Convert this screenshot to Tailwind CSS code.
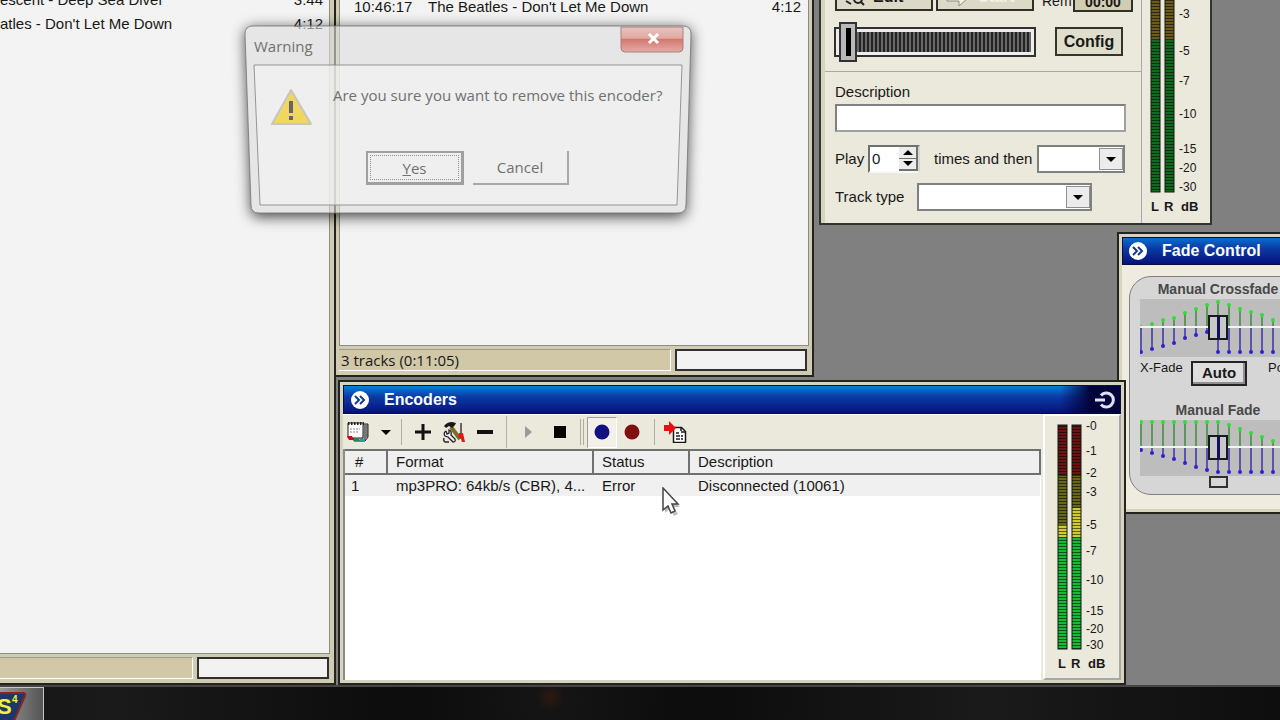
<!DOCTYPE html>
<html lang="en">
<head>
    <meta charset="UTF-8">
    <meta name="viewport" content="width=device-width, initial-scale=1.0">
    <title>Encoders</title>
    <script src="https://cdn.jsdelivr.net/npm/@tailwindcss/browser@4"></script>
</head>
<body class="relative h-screen overflow-hidden bg-[#808080] font-['Liberation_Sans',Arial,sans-serif] text-[15px] leading-5 text-[#181818]">

    <!-- Playlist -->
    <section class="absolute -top-3 left-0 flex h-[697px] w-[336px] flex-col border-r-2 border-b-2 border-[#24241e] bg-[#d0ccb4] pr-[4px] pb-[4px]">
        <ul class="flex-1 border-r border-b border-[#8c8c84] bg-[#f3f3f3] pr-[6px]">
            <li class="flex h-6 items-center justify-between"><span>escent - Deep Sea Diver</span><span>3:44</span></li>
            <li class="flex h-6 items-center justify-between"><span>atles - Don't Let Me Down</span><span>4:12</span></li>
        </ul>
        <div class="mt-[3px] flex h-[22px] gap-1 pr-px">
            <div class="flex-1 border-t border-r border-b border-t-[#a09c88] border-r-white border-b-white bg-[#d1c8a7]"></div>
            <div class="w-[132px] border-2 border-[#303030] bg-[#f2f2f2]"></div>
        </div>
    </section>

    <!-- Queue -->
    <section class="absolute -top-1 left-[334px] flex h-[381px] w-[480px] flex-col border-2 border-[#24241e] bg-[#d0ccb4] px-[3px] pb-[4px]">
        <ul class="flex-1 border-x border-b border-[#8c8c84] bg-[#f3f3f3] pr-[7px] pl-[14px]">
            <li class="flex h-[18px] items-center"><span class="w-[74px]">10:46:17</span><span class="flex-1">The Beatles - Don't Let Me Down</span><span>4:12</span></li>
        </ul>
        <div class="mt-[3px] flex h-[22px] gap-1 pr-[2px]">
            <div class="flex flex-1 items-center border-t border-r border-b border-t-[#a09c88] border-r-white border-b-white bg-[#d1c8a7] pl-[2px] font-['Open_Sans',sans-serif]">3 tracks (0:11:05)</div>
            <div class="w-[132px] border-2 border-[#303030] bg-[#f2f2f2]"></div>
        </div>
    </section>

    <!-- Voice panel -->
    <section class="absolute -top-5 left-[819px] flex h-[245px] w-[393px] border-2 border-[#34342c] bg-[#ebe8dc]">
        <div class="flex w-[320px] flex-col border-l-4 border-[#d6d3be]">
            <div class="flex h-[90px] flex-col justify-between border-b border-[#a8a8a0] pb-[15px] pl-[10px]">
                <div class="flex h-[30px]">
                    <button class="flex h-[29px] w-[98px] items-center gap-2 border-2 border-[#303028] bg-[#dcd9c6] pl-2 text-base font-bold">
                        <svg class="size-5" viewBox="0 0 20 20" fill="none" stroke="#222" stroke-width="2"><circle cx="13" cy="12" r="4"/><path d="M1 14l5 3M16 15l3 3"/></svg>Edit
                    </button>
                    <button disabled class="ml-[3px] flex h-[29px] w-[98px] items-center gap-2 border-2 border-[#303028] bg-[#dcd9c6] pl-2 text-base font-bold text-[#f4f2e8]">
                        <svg class="size-6" viewBox="0 0 24 24" fill="#f4f2e8" stroke="#8c8c84"><path d="M1 10h12V5l9 8-9 8v-5H1z"/></svg>Start
                    </button>
                    <span class="mt-[9px] ml-2 w-[31px] text-sm">Rem</span>
                    <output class="h-[30px] w-[60px] border-2 border-[#303028] bg-[#d1cdb2] pt-[8px] text-center text-sm font-bold">00:00</output>
                </div>
                <div class="flex h-[29px] items-center">
                    <input type="range" min="0" max="100" value="0" aria-label="Position" class="h-[42px] w-[200px] appearance-none bg-transparent [&::-webkit-slider-runnable-track]:h-[28px] [&::-webkit-slider-runnable-track]:border-4 [&::-webkit-slider-runnable-track]:border-[#ededed] [&::-webkit-slider-runnable-track]:bg-[repeating-linear-gradient(90deg,#222_0_2px,#686868_2px_4px)] [&::-webkit-slider-runnable-track]:outline-2 [&::-webkit-slider-runnable-track]:-outline-offset-1 [&::-webkit-slider-runnable-track]:outline-[#303030] [&::-webkit-slider-thumb]:relative [&::-webkit-slider-thumb]:-mt-[10px] [&::-webkit-slider-thumb]:h-[40px] [&::-webkit-slider-thumb]:w-[18px] [&::-webkit-slider-thumb]:appearance-none [&::-webkit-slider-thumb]:border-2 [&::-webkit-slider-thumb]:border-[#333] [&::-webkit-slider-thumb]:bg-[linear-gradient(90deg,#b8b8b8_5px,#000_5px_10px,#b8b8b8_10px)] [&::-webkit-slider-thumb]:shadow-[inset_0_4px_#b8b8b8,inset_0_-4px_#b8b8b8]">
                    <button class="ml-[20px] h-[29px] w-[68px] border-2 border-[#34342c] bg-[#dfddcc] text-base font-bold">Config</button>
                </div>
            </div>
            <div class="flex flex-1 flex-col pt-[10px] pl-[10px]">
                <label for="desc">Description</label>
                <input id="desc" type="text" class="mt-[2px] h-[28px] w-[291px] border-2 border-[#808080] border-r-[#a0a0a0] border-b-[#a0a0a0] bg-white">
                <div class="mt-[13px] flex h-[28px] items-center">
                    <label for="times" class="w-[33px]">Play</label>
                    <div class="flex h-[28px] w-[52px] border-2 border-[#707070] border-r-[#d8d8d0] border-b-[#f8f8f8] bg-white">
                        <input id="times" type="text" value="0" class="w-[29px] pl-[2px]">
                        <div class="flex flex-1 flex-col">
                            <button aria-label="More" class="flex flex-1 items-center justify-center border-r-2 border-b border-[#707070] bg-[#ececec]"><svg class="h-[5px] w-[10px]" viewBox="0 0 10 5"><path d="M0 5L5 0l5 5z"/></svg></button>
                            <button aria-label="Fewer" class="flex flex-1 items-center justify-center border-r-2 border-b-2 border-[#707070] bg-[#ececec]"><svg class="h-[5px] w-[10px]" viewBox="0 0 10 5"><path d="M0 0l5 5 5-5z"/></svg></button>
                        </div>
                    </div>
                    <label for="then" class="ml-[14px] w-[103px]">times and then</label>
                    <div class="relative">
                        <select id="then" class="block h-[28px] w-[88px] appearance-none border-2 border-[#808080] bg-white"><option></option></select>
                        <span class="pointer-events-none absolute top-[3px] right-[2px] flex h-[22px] w-6 items-center justify-center border border-[#909090] bg-[#ececec]"><svg class="h-[5px] w-[10px]" viewBox="0 0 10 5"><path d="M0 0l5 5 5-5z"/></svg></span>
                    </div>
                </div>
                <div class="mt-[10px] flex h-[28px] items-center">
                    <label for="type" class="w-[82px]">Track type</label>
                    <div class="relative">
                        <select id="type" class="block h-[28px] w-[175px] appearance-none border-2 border-[#808080] bg-white"><option></option></select>
                        <span class="pointer-events-none absolute top-[3px] right-[2px] flex h-[22px] w-6 items-center justify-center border border-[#909090] bg-[#ececec]"><svg class="h-[5px] w-[10px]" viewBox="0 0 10 5"><path d="M0 0l5 5 5-5z"/></svg></span>
                    </div>
                </div>
            </div>
        </div>
        <svg class="h-full flex-1 border-l border-[#a8a8b0]" viewBox="1142 -18 68 241" preserveAspectRatio="xMinYMin" fill="#181818">
            <defs>
                <pattern id="lines" width="12" height="3" patternUnits="userSpaceOnUse"><rect width="12" height="1" fill="#000" fill-opacity=".55"/></pattern>
            </defs>
            <g id="voiceMeter"></g>
            <g id="voiceScale" class="text-[12px]"></g>
            <text x="1151" y="211" class="text-[13px] font-bold">L</text>
            <text x="1164" y="211" class="text-[13px] font-bold">R</text>
            <text x="1181" y="211" class="text-[13px] font-bold">dB</text>
        </svg>
    </section>

    <!-- Fade control -->
    <section class="absolute top-[232px] left-[1117px] h-[282px] w-[202px] border-2 border-[#24241e] bg-[#d6d3be] p-[3px]">
        <div class="flex h-full flex-col bg-[#efecdf]">
            <h2 class="flex h-[28px] items-center gap-[15px] border border-[#061040] bg-linear-to-b from-[#0a6fd0] via-[#0c3aa4] via-40% to-[#08107c] pl-[6px] text-base font-bold text-white">
                <svg class="size-[18px]" viewBox="0 0 18 18"><circle cx="9" cy="9" r="9" fill="#fff"/><path d="M4 5l4 4-4 4M9 5l4 4-4 4" fill="none" stroke="#123a94" stroke-width="2"/></svg>
                <span>Fade Control</span>
            </h2>
            <div class="mx-[7px] mt-[11px] flex h-[219px] flex-col items-center rounded-[22px] border border-[#808080] bg-[#d6d6d6] pt-[2px] text-[13px]">
                <h3 class="h-5 text-sm leading-5 font-bold text-[#484848]">Manual Crossfade</h3>
                <div class="relative">
                    <svg id="crossfade" class="h-[58px] w-[156px] bg-[#bdbdbd]" viewBox="0 0 156 58"></svg>
                    <input type="range" aria-label="Manual Crossfade" class="absolute inset-0 h-[56px] w-[156px] appearance-none bg-transparent [&::-webkit-slider-thumb]:h-[25px] [&::-webkit-slider-thumb]:w-[20px] [&::-webkit-slider-thumb]:appearance-none [&::-webkit-slider-thumb]:border-2 [&::-webkit-slider-thumb]:border-[#181820] [&::-webkit-slider-thumb]:bg-[linear-gradient(90deg,#c8c8c8_7px,#10105c_7px_10px,#c8c8c8_10px)]">
                </div>
                <div class="mt-[3px] flex h-[26px] w-[156px] items-center whitespace-nowrap">
                    <span class="w-[51px] self-start leading-4">X-Fade</span>
                    <button class="h-[25px] w-[56px] border-2 border-[#242424] bg-[#dedede] text-[15px] font-bold shadow-[inset_-2px_-2px_#909090]">Auto</button>
                    <span class="ml-[21px] self-start leading-4">Post</span>
                </div>
                <h3 class="mt-[14px] h-5 text-sm leading-5 font-bold text-[#484848]">Manual Fade</h3>
                <div class="relative">
                    <svg id="fade" class="h-[56px] w-[156px] bg-[#bdbdbd]" viewBox="0 0 156 56"></svg>
                    <input type="range" aria-label="Manual Fade" class="absolute inset-0 h-[54px] w-[156px] appearance-none bg-transparent [&::-webkit-slider-thumb]:h-[25px] [&::-webkit-slider-thumb]:w-[20px] [&::-webkit-slider-thumb]:appearance-none [&::-webkit-slider-thumb]:border-2 [&::-webkit-slider-thumb]:border-[#181820] [&::-webkit-slider-thumb]:bg-[linear-gradient(90deg,#c8c8c8_7px,#10105c_7px_10px,#c8c8c8_10px)]">
                </div>
                <button aria-label="Reset" class="h-[12px] w-[19px] border-2 border-[#303030]"></button>
            </div>
        </div>
    </section>

    <!-- Encoders -->
    <section class="absolute top-[380px] left-[338px] h-[305px] w-[788px] border-2 border-[#24241e] bg-[#d6d3be] p-[3px]">
        <div class="flex h-full flex-col bg-[#ebe8dc]">
            <h2 class="flex h-[29px] shrink-0 items-center border border-[#061040] bg-linear-to-b from-[#0a7fde] via-[#0c3aa4] via-40% to-[#08107c] pl-[7px] text-base font-bold text-white">
                <svg class="size-[18px]" viewBox="0 0 18 18"><circle cx="9" cy="9" r="9" fill="#fff"/><path d="M4 5l4 4-4 4M9 5l4 4-4 4" fill="none" stroke="#123a94" stroke-width="2"/></svg>
                <span class="ml-[15px] flex-1">Encoders</span>
                <span class="flex h-full w-[60px] items-center justify-end bg-linear-to-r from-transparent to-[#04043c] to-50% pr-1">
                    <svg class="h-[18px] w-[21px]" viewBox="0 0 21 18" fill="none" stroke="#dfe2f5" stroke-width="3"><path d="M6 4.500A7 7 0 1 1 6 13.500M0 9h10"/></svg>
                </span>
            </h2>
            <div class="flex min-h-0 flex-1">
                <div class="flex flex-1 flex-col border-t border-white">
                    <div class="flex h-[34px] items-center pl-[3px]">
                        <button aria-label="Encoder list" class="w-[25px]">
                            <svg class="h-[22px] w-[23px]" viewBox="0 0 23 22">
                                <path d="M6 3h16v13l-3 4H8z" fill="#aaa" stroke="#222"/>
                                <path d="M19 4v15M21 4v12" stroke="#444"/>
                                <path d="M2 2h15v15H2z" fill="#fff" stroke="#222"/>
                                <path d="M2 2.500h16" stroke="#222" stroke-width="3" stroke-dasharray="1.500 1.500"/>
                                <path d="M4 8h10M4 11h8" stroke="#888" stroke-dasharray="2 1"/>
                                <path d="M1 15h5l2 4H3z" fill="#c01020"/><path d="M8 17h5v3H8z" fill="#189048"/><path d="M14 18h5v3h-5z" fill="#20a0a0"/>
                            </svg>
                        </button>
                        <button aria-label="Encoder menu" class="flex w-[30px] justify-center"><svg class="h-[5px] w-[10px]" viewBox="0 0 10 5"><path d="M0 0l5 5 5-5z"/></svg></button>
                        <i class="mr-[5px] h-[26px] w-px bg-[#b0aea2]"></i>
                        <button aria-label="Add" class="flex w-[31px] justify-center"><svg class="size-[18px]" viewBox="0 0 18 18"><path d="M9 1v16M1 9h16" stroke="#111" stroke-width="3"/></svg></button>
                        <button aria-label="Configure" class="flex w-[31px] justify-center">
                            <svg class="h-[23px] w-[24px]" viewBox="0 0 24 23" fill="none">
                                <path d="M9 6l9 12" stroke="#77702c" stroke-width="4"/>
                                <path d="M2 5q3-4 8-4l4 1-1 2-3 3-3-2-3 2z" fill="#181818"/>
                                <path d="M19 2v11" stroke="#666" stroke-width="2"/>
                                <path d="M17 12h4l2 9h-3l-1-3-3-2z" fill="#d81c18"/>
                                <path d="M4 10q-3 2-1 5l3 1 5 5q3 0 2-3l-4-4q1-4-2-5v3l-2 1-1-3M2 17q-1 3 1 4h4" fill="#eee" stroke="#222" stroke-width="1.300"/>
                            </svg>
                        </button>
                        <button aria-label="Remove" class="flex w-[31px] justify-center"><svg class="size-[18px]" viewBox="0 0 18 18"><path d="M1 9h16" stroke="#111" stroke-width="4"/></svg></button>
                        <i class="mr-[6px] ml-[6px] h-[32px] w-px bg-[#b0aea2]"></i>
                        <button disabled aria-label="Start" class="flex w-[31px] justify-center"><svg class="h-[12px] w-[7px]" viewBox="0 0 7 12"><path d="M0 0l7 6-7 6z" fill="#999"/></svg></button>
                        <button aria-label="Stop" class="flex w-[31px] justify-center"><svg class="size-3" viewBox="0 0 12 12"><path d="M0 0h12v12H0z"/></svg></button>
                        <i class="mr-[3px] ml-[5px] h-[26px] w-[4px] border-x border-[#b0aea2]"></i>
                        <button aria-label="Connect" class="flex h-[31px] w-[30px] items-center justify-center border border-t-[#a0a0a0] border-r-white border-b-white border-l-[#a0a0a0] bg-[#f2f0e8]"><svg class="size-4" viewBox="0 0 16 16"><circle cx="8" cy="8" r="7.500" fill="#101080"/></svg></button>
                        <button aria-label="Record" class="flex w-[30px] justify-center"><svg class="size-4" viewBox="0 0 16 16"><circle cx="8" cy="8" r="7.500" fill="#801010"/></svg></button>
                        <i class="mr-[5px] ml-[7px] h-[26px] w-px bg-[#b0aea2]"></i>
                        <button aria-label="Export log" class="flex w-[31px] justify-center">
                            <svg class="h-[22px] w-[23px]" viewBox="0 0 23 22">
                                <path d="M9.500 6.500h8l4 4v11h-12z" fill="#fff" stroke="#181818" stroke-width="1.500"/>
                                <path d="M17 6v5h5M12 12h3M12 15h7M12 18h7" fill="none" stroke="#181818" stroke-width="1.500" stroke-dasharray="4 1"/>
                                <path d="M0 4h5V0l7 7-7 7v-4H0z" fill="#e81010"/>
                            </svg>
                        </button>
                    </div>
                    <div class="flex-1 border-l-2 border-[#8c8c84] bg-white">
                        <table class="w-full table-fixed">
                            <thead>
                                <tr class="h-[24px] bg-[#efefef] text-left">
                                    <th class="w-[42px] border-2 border-l-0 border-[#707070] pl-[10px] font-normal">#</th>
                                    <th class="w-[206px] border-2 border-[#707070] pl-[8px] font-normal">Format</th>
                                    <th class="w-[96px] border-2 border-[#707070] pl-[8px] font-normal">Status</th>
                                    <th class="border-2 border-[#707070] pl-[8px] font-normal">Description</th>
                                </tr>
                            </thead>
                            <tbody>
                                <tr class="h-[22px] bg-[#f0f0f0]">
                                    <td class="pl-[6px]">1</td>
                                    <td class="truncate pl-[9px]">mp3PRO: 64kb/s (CBR), 4...</td>
                                    <td class="pl-[9px]">Error</td>
                                    <td class="pl-[9px]">Disconnected (10061)</td>
                                </tr>
                            </tbody>
                        </table>
                    </div>
                </div>
                <svg class="ml-[2px] h-full w-[78px] border-2 border-t-white border-r-[#a8a8a8] border-b-[#a8a8a8] border-l-white" viewBox="1045 416 74 262" preserveAspectRatio="xMinYMin" fill="#181818">
                    <g id="encoderMeter"></g>
                    <g id="encoderScale" class="text-[12px]"></g>
                    <text x="1058" y="668" class="text-[13px] font-bold">L</text>
                    <text x="1071" y="668" class="text-[13px] font-bold">R</text>
                    <text x="1088" y="668" class="text-[13px] font-bold">dB</text>
                </svg>
            </div>
        </div>
    </section>

    <!-- Taskbar -->
    <footer class="absolute inset-x-0 bottom-0 flex h-[35px] border-t-2 border-[#484644] bg-[radial-gradient(circle_at_43%_30%,#2c1a12,#141414_2%,#0c0c0c_20%,#1a1a1a_60%,#0e0e0e)]">
        <button aria-label="SAM4" class="w-[44px] overflow-hidden border-t border-r border-[#c8c8c8] bg-linear-to-r from-[#999] to-[#555]">
            <svg class="h-[32px] w-[43px]" viewBox="0 0 43 32"><path d="M-4 5h28q2 1 1 3L14 33H-4z" fill="#1c3866" stroke="#8c2424" stroke-width="2"/><text x="-3" y="26" fill="#f4f03c" class="text-[22px] font-bold">S</text><text x="12" y="15" fill="#f4f03c" class="text-[10px] font-bold">4</text></svg>
        </button>
    </footer>

    <!-- Closing dialog -->
    <div role="dialog" aria-label="Warning" class="absolute top-[26px] left-[245px] h-[188px] w-[446px] font-['Open_Sans',sans-serif] text-[#707070]">
        <svg class="absolute inset-0 size-full overflow-visible" viewBox="0 0 446 188" fill="none">
            <defs>
                <clipPath id="outside"><path clip-rule="evenodd" d="M-40-30h526v260h-526zM8 0h430q8 0 8 8L441 179q0 8-8 8H14q-8 0-8-8L0 8q0-8 8-8z"/></clipPath>
                <filter id="soft" x="-20%" y="-20%" width="140%" height="150%"><feGaussianBlur stdDeviation="7"/></filter>
                <linearGradient id="red" x2="0" y2="1"><stop stop-color="#e8c4c0"/><stop offset=".45" stop-color="#e0a8a2"/><stop offset=".5" stop-color="#d2786e"/><stop offset="1" stop-color="#e4aca6"/></linearGradient>
            </defs>
            <g clip-path="url(#outside)"><path d="M8 2h430q8 0 8 8L441 183q0 8-8 8H14q-8 0-8-8L0 10q0-8 8-8z" fill="#000" fill-opacity=".7" filter="url(#soft)"/></g>
            <path d="M8 0h430q8 0 8 8L441 179q0 8-8 8H14q-8 0-8-8L0 8q0-8 8-8z" fill="#dedede" fill-opacity=".6" stroke="#707070" stroke-opacity=".8"/>
            <path d="M9 39h428l-5 140H15z" fill="#f4f4f4" fill-opacity=".65" stroke="#808080" stroke-opacity=".8"/>
            <path d="M376 1h62v21q0 4-4 4h-54q-4 0-4-4z" fill="url(#red)" stroke="#a88080"/>
            <path d="M404 8l9 9M413 8l-9 9" stroke="#fff" stroke-width="3"/>
            <path d="M46 64L66 98H27z" fill="#f0d860" stroke="#c8c4c4" stroke-width="2" stroke-linejoin="round"/>
            <path d="M46 75v12M46 90v4" stroke="#666" stroke-width="4"/>
        </svg>
        <div class="relative flex h-full flex-col">
            <div class="flex h-[39px] items-center justify-between pr-[8px] pl-[9px] text-[15px]"><span>Warning</span><button aria-label="Close" class="h-[26px] w-[62px] self-start"></button></div>
            <p class="mt-[20px] ml-[88px] text-[15px] whitespace-nowrap">Are you sure you want to remove this encoder?</p>
            <div class="mt-[46px] ml-[121px] flex gap-[9px] text-[15px]">
                <button class="h-[34px] w-[98px] border-2 border-r-[3px] border-b-[3px] border-[#a0a0a0] p-[2px]"><span class="flex h-full items-center justify-center border border-dotted border-[#909090]"><u>Y</u>es</span></button>
                <button class="h-[34px] w-[96px] border-r-2 border-b-2 border-[#a8a8a8]">Cancel</button>
            </div>
        </div>
    </div>

    <!-- Mouse pointer -->
    <svg class="absolute top-[487px] left-[661px] h-[29px] w-[20px]" viewBox="0 0 20 29"><path d="M4 4v22l5-4 4 7 4-2-4-7h6z" fill="#000" fill-opacity=".25"/><path d="M2 1v22l5-4 3 7 4-2-3-7h6z" fill="#fff" stroke="#444" stroke-width="1.500"/></svg>

    <script>
        const NS = 'http://www.w3.org/2000/svg';

        function add(parent, name, attrs, text) {
            const el = document.createElementNS(NS, name);
            for (const key in attrs) el.setAttribute(key, attrs[key]);
            if (text) el.textContent = text;
            document.getElementById(parent).appendChild(el);
        }

        // bands: [top, bottom, colour]
        function drawMeter(id, x, bands) {
            bands.forEach(([top, bottom, fill]) => add(id, 'rect', { x, y: top, width: 9, height: bottom - top, fill }));
            const top = bands[0][0];
            const height = bands[bands.length - 1][1] - top;
            add(id, 'rect', { x, y: top, width: 9, height, fill: 'url(#lines)' });
            add(id, 'rect', { x, y: top, width: 9, height, fill: 'none', stroke: '#101810' });
        }

        function drawScale(id, x, marks) {
            marks.forEach(([label, y]) => add(id, 'text', { x, y: y + 4 }, label));
        }

        drawMeter('voiceMeter', 1151, [[-18, 40, '#6a5a1c'], [40, 192, '#106a20']]);
        drawMeter('voiceMeter', 1165, [[-18, 40, '#6a5a1c'], [40, 192, '#106a20']]);
        drawScale('voiceScale', 1179, [['-3', 14], ['-5', 51], ['-7', 81], ['-10', 114], ['-15', 149], ['-20', 168], ['-30', 187]]);

        drawMeter('encoderMeter', 1058, [[425, 476, '#6a1414'], [476, 525, '#66661c'], [525, 537, '#d0cc30'], [537, 649, '#18b838']]);
        drawMeter('encoderMeter', 1072, [[425, 476, '#6a1414'], [476, 508, '#66661c'], [508, 537, '#d0cc30'], [537, 649, '#18b838']]);
        drawScale('encoderScale', 1086, [['-0', 426], ['-1', 451], ['-2', 473], ['-3', 492], ['-5', 525], ['-7', 551], ['-10', 580], ['-15', 611], ['-20', 629], ['-30', 645]]);

        // Fade curves: stems up from and down to the centre line
        function drawCurve(id, mid, ups, downs) {
            ups.forEach((y, i) => {
                const x = 1 + i * 11;
                add(id, 'path', { d: `M${x} ${mid}V${y}`, stroke: '#3c8c3c', 'stroke-width': 1.5 });
                add(id, 'circle', { cx: x, cy: y + 1, r: 2, fill: '#30e030' });
                add(id, 'path', { d: `M${x} ${mid}V${downs[i]}`, stroke: '#3c30a8', 'stroke-width': 1.5 });
                add(id, 'circle', { cx: x, cy: downs[i] - 1, r: 2, fill: '#3020d0' });
            });
            add(id, 'path', { d: `M0 ${mid}H156`, stroke: '#f4f4f4', 'stroke-width': 2 });
        }

        drawCurve('crossfade', 28,
            [27, 24, 20, 18, 13, 9, 5, 2, 5, 9, 12, 15, 20, 24, 27],
            [54, 51, 48, 45, 40, 37, 34, 54, 54, 54, 54, 54, 54, 54, 54]);
        drawCurve('fade', 27,
            [1, 1, 1, 1, 1, 1, 1, 1, 4, 8, 12, 16, 20, 24, 26],
            [31, 34, 37, 40, 44, 48, 51, 53, 53, 53, 53, 53, 53, 53, 53]);
    </script>
</body>
</html>
